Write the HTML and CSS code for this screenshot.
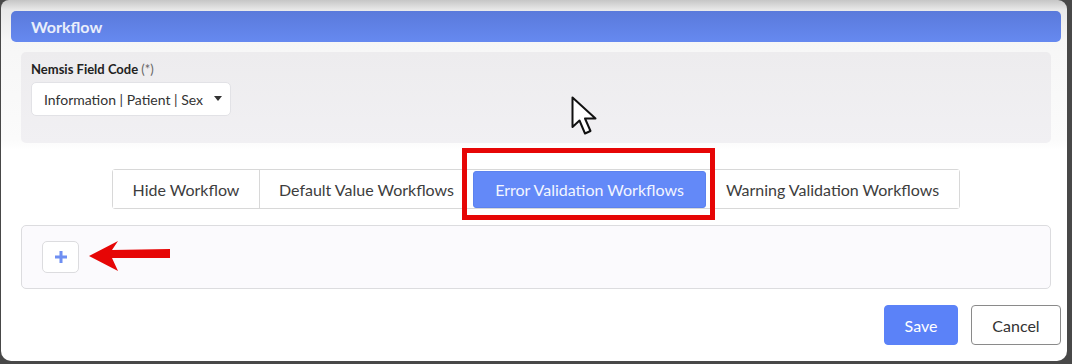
FILE: index.html
```html
<!DOCTYPE html>
<html>
<head>
<meta charset="utf-8">
<link rel="stylesheet" href="styles.css">
</head>
<body>
<div class="dialog">
  <div class="header">Workflow</div>
  <div class="field-panel">
    <label class="field-label">Nemsis Field Code <span class="req">(*)</span></label>
    <div class="select">
      <span>Information | Patient | Sex</span>
      <span class="caret"></span>
    </div>
  </div>
  <div class="tabs-row">
    <div class="tabs">
      <button class="tab">Hide Workflow</button>
      <button class="tab tab-default">Default Value Workflows</button>
      <button class="tab active">Error Validation Workflows</button>
      <button class="tab">Warning Validation Workflows</button>
      <div class="highlight"></div>
    </div>
  </div>
  <div class="list-panel">
    <button class="add-btn">
      <svg width="14" height="14" viewBox="0 0 14 14"><path d="M7 1v12M1 7h12" stroke="#6f8ff2" stroke-width="3" stroke-linecap="butt"/></svg>
    </button>
    <svg class="red-arrow" width="90" height="34" viewBox="86 240 90 34"><path d="M88 256 L117 241 L111 250 L169 249 L169 258 L111 258 L117 271 Z" fill="#e60606"/></svg>
  </div>
  <div class="footer">
    <button class="btn btn-save">Save</button>
    <button class="btn btn-cancel">Cancel</button>
  </div>
  <svg class="cursor" width="28" height="42" viewBox="0 0 28 42"><path d="M1.5 1.5 L1.5 31 L8.5 24.5 L14 37.5 L19.5 35 L14 22.5 L24.5 22.5 Z" fill="#fff" stroke="#111" stroke-width="2" stroke-linejoin="round"/></svg>
</div>
</body>
</html>
```

FILE: styles.css
```css
* { box-sizing: border-box; }
html, body { margin: 0; padding: 0; }
body {
  background: #484848;
  width: 1072px;
  height: 364px;
  overflow: hidden;
  font-family: Lato, "Open Sans", sans-serif;
}
.dialog {
  position: relative;
  margin-left: 1px;
  width: 1066px;
  height: 361px;
  border-radius: 8px 9px 10px 10px;
  background: linear-gradient(#c6c6c6 0px, #e9e9e9 10px, #f6f6f6 40px, #f7f7f7 52px, #fbfbfb 140px, #ffffff 150px);
  padding-top: 11px;
  display: flex;
  flex-direction: column;
}
.header {
  margin-left: 10px;
  width: 1050px;
  height: 31px;
  border-radius: 5px;
  background: linear-gradient(#5a7adb, #6689f0);
  color: #e9eefb;
  font-weight: 700;
  font-size: 16px;
  line-height: 31px;
  padding-left: 20px;
}
.field-panel {
  margin: 10px 0 0 20px;
  width: 1030px;
  height: 91px;
  border-radius: 5px;
  background: linear-gradient(#edecee, #f1f0f3);
  padding: 10px 10px 0 10px;
  display: flex;
  flex-direction: column;
  align-items: flex-start;
}
.field-label {
  font-size: 13px;
  font-weight: 700;
  color: #222;
  line-height: 15px;
}
.req { font-weight: 400; color: #666; }
.select {
  margin-top: 5px;
  width: 200px;
  height: 34px;
  background: #fff;
  border: 1px solid #e2e2e6;
  border-radius: 5px;
  display: flex;
  align-items: center;
  justify-content: space-between;
  padding: 0 8px 0 12px;
  font-size: 14px;
  color: #333;
}
.caret {
  width: 0; height: 0;
  border-left: 4px solid transparent;
  border-right: 4px solid transparent;
  border-top: 5px solid #333;
  margin-top: -2px;
}
.tabs-row {
  margin-top: 26px;
  display: flex;
  justify-content: center;
  padding-left: 4px;
}
.tabs {
  position: relative;
  display: flex;
  align-items: center;
  height: 40px;
  border: 1px solid #d8d8d8;
  border-radius: 3px;
  background: #fff;
}
.tab {
  font-family: Lato, "Open Sans", sans-serif;
  font-size: 16px;
  color: #3d3d3d;
  background: #fff;
  border: none;
  border-right: 1px solid #d8d8d8;
  height: 38px;
  padding: 0;
  margin: 0;
}
.tab:first-child { width: 147px; }
.tab-default { width: 213px; border-right: none; }
.tab.active {
  width: 233px;
  height: 37px;
  background: #6389f8;
  color: #f3f6ff;
  border: 1px solid #5c82ee;
  border-radius: 3px;
}
.tab:last-of-type { border-right: none; width: 253px; }
.highlight {
  position: absolute;
  left: 349px;
  top: -22px;
  width: 253px;
  height: 72px;
  border: 5px solid #e60606;
}
.list-panel {
  position: relative;
  margin: 16px 0 0 20px;
  width: 1030px;
  height: 64px;
  border: 1px solid #dcdcdf;
  border-radius: 5px;
  background: #fbfafd;
  padding: 15px 0 0 20px;
}
.add-btn {
  width: 37px;
  height: 32px;
  background: #fff;
  border: 1px solid #dcdcdf;
  border-radius: 5px;
  display: flex;
  align-items: center;
  justify-content: center;
  padding: 0;
}
.red-arrow {
  position: absolute;
  left: 65px;
  top: 14px;
}
.footer {
  margin-top: 16px;
  display: flex;
  justify-content: flex-end;
  gap: 13px;
  padding-right: 6px;
}
.btn {
  font-family: Lato, "Open Sans", sans-serif;
  font-size: 16px;
  height: 40px;
  border-radius: 4px;
  padding: 0;
}
.btn-save {
  width: 74px;
  background: #5b82f8;
  border: 1px solid #5b82f8;
  color: #fff;
}
.btn-cancel {
  width: 90px;
  background: #fff;
  border: 1px solid #8a8a8a;
  color: #333;
}
.cursor {
  position: absolute;
  left: 570px;
  top: 96px;
}
```
